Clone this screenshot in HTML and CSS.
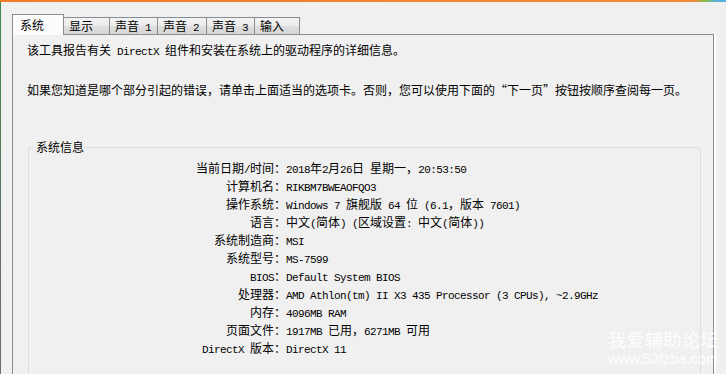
FILE: index.html
```html
<!DOCTYPE html>
<html lang="zh-CN">
<head>
<meta charset="utf-8">
<title>DirectX 诊断工具</title>
<link rel="stylesheet" href="styles.css">
</head>
<body>
<div class="topbar"></div>
<div class="tabs">
  <div class="tab active">系统</div>
  <div class="tab w46">显示</div>
  <div class="tab w48">声音<span class="en"> 1</span></div>
  <div class="tab w49">声音<span class="en"> 2</span></div>
  <div class="tab w48">声音<span class="en"> 3</span></div>
  <div class="tab w45">输入</div>
</div>
<div class="panel">
  <p>该工具报告有关<span class="en"> DirectX </span>组件和安装在系统上的驱动程序的详细信息。</p>
  <p class="p2">如果您知道是哪个部分引起的错误，请单击上面适当的选项卡。否则，您可以使用下面的<span class="fw">“下一页”</span>按钮按顺序查阅每一页。</p>
  <fieldset class="group">
    <legend>系统信息</legend>
    <div class="rows">
      <div class="k">当前日期<span class="en">/</span>时间：</div><div class="v"><span class="en">2018</span>年<span class="en">2</span>月<span class="en">26</span>日<span class="en"> </span>星期一，<span class="en">20:53:50</span></div>
      <div class="k">计算机名：</div><div class="v"><span class="en">RIKBM7BWEAOFQO3</span></div>
      <div class="k">操作系统：</div><div class="v"><span class="en">Windows 7 </span>旗舰版<span class="en"> 64 </span>位<span class="en"> (6.1</span>，版本<span class="en"> 7601)</span></div>
      <div class="k">语言：</div><div class="v">中文<span class="en">(</span>简体<span class="en">) (</span>区域设置<span class="en">: </span>中文<span class="en">(</span>简体<span class="en">))</span></div>
      <div class="k">系统制造商：</div><div class="v"><span class="en">MSI</span></div>
      <div class="k">系统型号：</div><div class="v"><span class="en">MS-7599</span></div>
      <div class="k"><span class="en">BIOS</span>：</div><div class="v"><span class="en">Default System BIOS</span></div>
      <div class="k">处理器：</div><div class="v"><span class="en">AMD Athlon(tm) II X3 435 Processor (3 CPUs), ~2.9GHz</span></div>
      <div class="k">内存：</div><div class="v"><span class="en">4096MB RAM</span></div>
      <div class="k">页面文件：</div><div class="v"><span class="en">1917MB </span>已用，<span class="en">6271MB </span>可用</div>
      <div class="k"><span class="en">DirectX </span>版本：</div><div class="v"><span class="en">DirectX 11</span></div>
    </div>
  </fieldset>
</div>
<div class="wm">
  <div class="wm1">我爱辅助论坛</div>
  <div class="wm2">www.52fzba.com</div>
</div>
</body>
</html>
```
FILE: styles.css
```css
html, body {
  margin: 0;
  padding: 0;
}
body {
  width: 726px;
  height: 374px;
  overflow: hidden;
  position: relative;
  background: linear-gradient(to bottom, #3f8a48, #5f6f62 60%, #6d6d72) 0 0 / 1px 100% no-repeat, #f0f0f0;
  font-family: "Noto Sans CJK SC", "Noto Sans", sans-serif;
  font-size: 12px;
  color: #000;
}
.en {
  font-family: "Liberation Mono", "DejaVu Sans Mono", monospace;
  font-size: 11px;
  letter-spacing: -0.6px;
}
.fw {
  font-feature-settings: "fwid" 1;
}
.topbar {
  height: 2px;
  background: linear-gradient(to right, #ee7b27 0%, #f38b39 95.5%, #86c04f 97.2%, #55ade0 98.8%, #55ade0 100%);
}
.tabs {
  display: flex;
  align-items: flex-end;
  padding: 12px 0 0 12px;
}
.tab {
  box-sizing: border-box;
  height: 17px;
  border-top: 1px solid #898c95;
  border-right: 1px solid #898c95;
  background: linear-gradient(#f3f3f3, #ebebeb 50%, #dfdfdf 52%, #d6d6d6);
  padding-left: 5px;
  line-height: 16px;
  white-space: nowrap;
}
.tab.active {
  width: 52px;
  height: 21px;
  border-left: 1px solid #898c95;
  background: #fcfcfc;
  margin-bottom: -1px;
  position: relative;
  z-index: 1;
  padding: 1px 0 0 7px;
  line-height: 18px;
}
.w45 { width: 45px; }
.w46 { width: 46px; }
.w48 { width: 48px; }
.w49 { width: 49px; }
.panel {
  box-sizing: border-box;
  margin-left: 12px;
  width: 702px;
  height: 340px;
  border: 1px solid #898c95;
  border-bottom: none;
  box-shadow: 2px 0 0 #ffffff;
  padding: 6px 0 0 14px;
  overflow: hidden;
}
.panel p {
  margin: 0;
  line-height: 18px;
  white-space: nowrap;
}
.panel .p2 {
  margin-top: 20px;
}
.group {
  box-sizing: border-box;
  margin: 39px 0 0 1px;
  padding: 0;
  width: 673px;
  height: 300px;
  min-width: 0;
  border: 1px solid #d5dfe5;
  border-radius: 3px;
}
.group legend {
  margin-left: 5px;
  padding: 0 2px;
  line-height: 18px;
}
.rows {
  display: grid;
  grid-template-columns: 257px auto;
  grid-auto-rows: 18px;
  padding-top: 3px;
  line-height: 18px;
  white-space: nowrap;
}
.k {
  text-align: right;
}
.wm {
  position: absolute;
  left: 600px;
  top: 327px;
  width: 126px;
  text-align: center;
  color: rgba(255, 255, 255, 0.92);
}
.wm1 {
  font-size: 18.5px;
  line-height: 24px;
}
.wm2 {
  font-family: "Liberation Sans", Arial, sans-serif;
  font-size: 14.5px;
  line-height: 16px;
}
```
